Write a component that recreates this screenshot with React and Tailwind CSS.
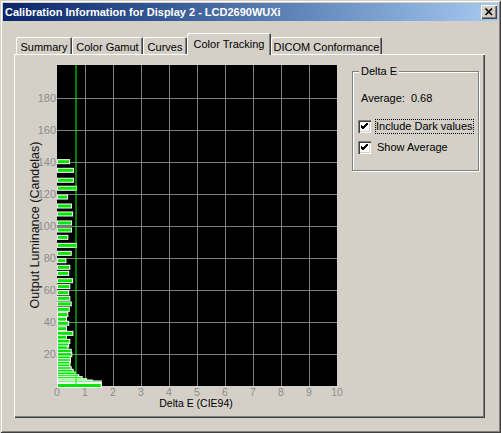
import React from "react";

// [luminance (cd), delta E] per measured step
const steps = [
  [140.2, 0.43], [134.8, 0.57], [128.6, 0.57], [123.6, 0.68], [118.1, 0.36],
  [112.5, 0.5], [107.5, 0.54], [101.9, 0.5], [97.5, 0.5], [92.9, 0.37],
  [87.9, 0.68], [82.9, 0.49], [78.3, 0.3], [74.2, 0.44], [70.4, 0.4],
  [65.8, 0.54], [62.1, 0.44], [58.3, 0.4], [54.8, 0.44], [51.3, 0.49],
  [47.9, 0.42], [44.6, 0.37], [41.7, 0.32], [39.2, 0.4], [35.8, 0.32],
  [32.9, 0.55], [30.4, 0.32], [27.9, 0.44], [25.6, 0.4], [23.8, 0.37],
  [21.7, 0.49], [19.6, 0.51], [17.5, 0.46], [15.8, 0.46], [14.2, 0.44],
  [12.5, 0.44], [10.8, 0.49], [9.2, 0.56], [7.5, 0.64], [5.8, 0.76],
  [4.6, 0.88], [3.3, 1.04], [2.5, 1.24], [1.9, 1.56], [1.0, 1.56], [0.3, 1.56],
];

const AVERAGE = 0.68;

// plot geometry (page coords)
const X0 = 57;
const Y0 = 386;
const PX_PER_DE = 28;
const PX_PER_CD = 1.6;

const xOf = (de) => X0 + de * PX_PER_DE;
const yOf = (cd) => Y0 - cd * PX_PER_CD;

const raised =
  "shadow-[inset_1px_1px_0_#ffffff,inset_-1px_-1px_0_#404040,inset_-2px_-2px_0_#808080]";

function Chart() {
  const lum = [20, 40, 60, 80, 100, 120, 140, 160, 180];
  const de = [0, 1, 2, 3, 4, 5, 6, 7, 8, 9, 10];
  return (
    <svg width="336" height="363" viewBox="14 54 336 363" className="shrink-0">
      <rect x={X0} y={65} width={280} height={321} fill="#000" />
      {de.slice(1, 10).map((d) => (
        <line key={d} x1={xOf(d) + 0.5} x2={xOf(d) + 0.5} y1={65} y2={Y0} stroke="#7c7c7c" />
      ))}
      {lum.map((l) => (
        <line key={l} x1={X0} x2={337} y1={yOf(l) + 0.5} y2={yOf(l) + 0.5} stroke="#7c7c7c" />
      ))}
      {steps.map(([l, d], i) => (
        <rect
          key={i}
          x={X0 + 0.5}
          y={yOf(l) - 2}
          width={d * PX_PER_DE}
          height={4}
          fill="#00e600"
          stroke="#ffffff"
        />
      ))}
      <line x1={xOf(AVERAGE)} x2={xOf(AVERAGE)} y1={65} y2={Y0} stroke="#00ff00" />

      <g fontFamily="'Liberation Sans', Arial, sans-serif" fontSize="11" fill="#8c8c8c">
        {lum.map((l) => (
          <text key={l} x={56} y={yOf(l) + 4} textAnchor="end">
            {l}
          </text>
        ))}
        {de.map((d) => (
          <text key={d} x={xOf(d)} y={396} textAnchor="middle" fontSize="10.5">
            {d}
          </text>
        ))}
      </g>
      <text
        x={196}
        y={407}
        textAnchor="middle"
        fontFamily="'Liberation Sans', Arial, sans-serif"
        fontSize="10.5"
        fill="#000"
      >
        Delta E (CIE94)
      </text>
      <text
        x={39}
        y={225}
        transform="rotate(-90 39 225)"
        textAnchor="middle"
        fontFamily="'Liberation Sans', Arial, sans-serif"
        fontSize="12.5"
        fill="#111"
      >
        Output Luminance (Candelas)
      </text>
    </svg>
  );
}

function Checkbox({ label, focused }) {
  return (
    <div className="flex items-center h-[17px]">
      <div className="w-[13px] h-[13px] bg-white shadow-[inset_1px_1px_0_#808080,inset_2px_2px_0_#404040,inset_-1px_-1px_0_#ffffff,inset_-2px_-2px_0_#d4d0c8] flex items-center justify-center">
        <svg width="7" height="7" viewBox="0 0 7 7">
          <path d="M0 2 L2 4 L7 -1 M0 3 L2 5 L7 0 M0 4 L2 6 L7 1" stroke="#000" strokeWidth="1" fill="none" />
        </svg>
      </div>
      <span
        className={
          "ml-[4px] px-[1px] leading-[15px] " +
          (focused ? "outline outline-1 outline-dotted outline-black -outline-offset-1" : "border border-transparent")
        }
      >
        {label}
      </span>
    </div>
  );
}

export default function App() {
  const tabs = [
    { name: "Summary", w: "w-[56px]" },
    { name: "Color Gamut", w: "w-[71px]" },
    { name: "Curves", w: "w-[44px]" },
    { name: "Color Tracking", w: "w-[84px]", active: true },
    { name: "DICOM Conformance", w: "w-[111px]" },
  ];

  return (
    <div className="w-[501px] h-[433px] bg-[#d4d0c8] font-['Liberation_Sans',Arial,sans-serif] text-[11px] text-black shadow-[inset_1px_1px_0_#d4d0c8,inset_-1px_-1px_0_#404040,inset_2px_2px_0_#ffffff,inset_-2px_-2px_0_#808080] flex flex-col overflow-hidden">
      {/* Title bar */}
      <div className="mx-[3px] mt-[3px] h-[18px] bg-gradient-to-r from-[#0a246a] to-[#a6caf0] flex items-center pl-[2px]">
        <span className="font-bold text-white text-[11px] whitespace-nowrap">
          Calibration Information for Display 2 - LCD2690WUXi
        </span>
        <div className={"ml-auto mr-[1px] w-[16px] h-[14px] bg-[#d4d0c8] flex items-center justify-center " + raised}>
          <svg width="16" height="14" viewBox="0 0 16 14">
            <path d="M4.5 3.5 L11 10 M11 3.5 L4.5 10" stroke="#000" strokeWidth="1.7" />
          </svg>
        </div>
      </div>

      {/* Tabs */}
      <div className="ml-[14px] mt-[12px] flex flex-col">
        <div className="flex items-end h-[21px] pl-[2px]">
          {tabs.map((t) =>
            t.active ? (
              <div
                key={t.name}
                className={
                  t.w +
                  " h-[22px] -mb-[1px] relative z-10 bg-[#d4d0c8] rounded-t-[2px] flex items-start justify-center pt-[3px] shadow-[inset_1px_1px_0_#ffffff,inset_-1px_0_0_#404040,inset_-2px_0_0_#808080]"
                }
              >
                {t.name}
              </div>
            ) : (
              <div
                key={t.name}
                className={
                  t.w +
                  " h-[17px] bg-[#d4d0c8] rounded-t-[2px] flex items-start justify-center pt-[2px] shadow-[inset_1px_1px_0_#ffffff,inset_-1px_0_0_#404040,inset_-2px_0_0_#808080]"
                }
              >
                {t.name}
              </div>
            )
          )}
        </div>

        {/* Panel */}
        <div className={"w-[471px] h-[364px] flex " + raised}>
          <Chart />
          <div className="ml-[2px] mt-[17px] w-[127px] h-[100px] relative border border-[#808080] shadow-[inset_1px_1px_0_#ffffff,1px_1px_0_#ffffff]">
            <span className="absolute -top-[7px] left-[6px] px-[2px] bg-[#d4d0c8] leading-[13px]">Delta E</span>
            <div className="pl-[5px] pt-[20px] flex flex-col">
              <div className="pl-[3px] leading-[13px] whitespace-pre">Average:  0.68</div>
              <div className="mt-[13px] flex flex-col gap-[4px]">
                <Checkbox label="Include Dark values" focused />
                <Checkbox label="Show Average" />
              </div>
            </div>
          </div>
        </div>
      </div>
    </div>
  );
}
